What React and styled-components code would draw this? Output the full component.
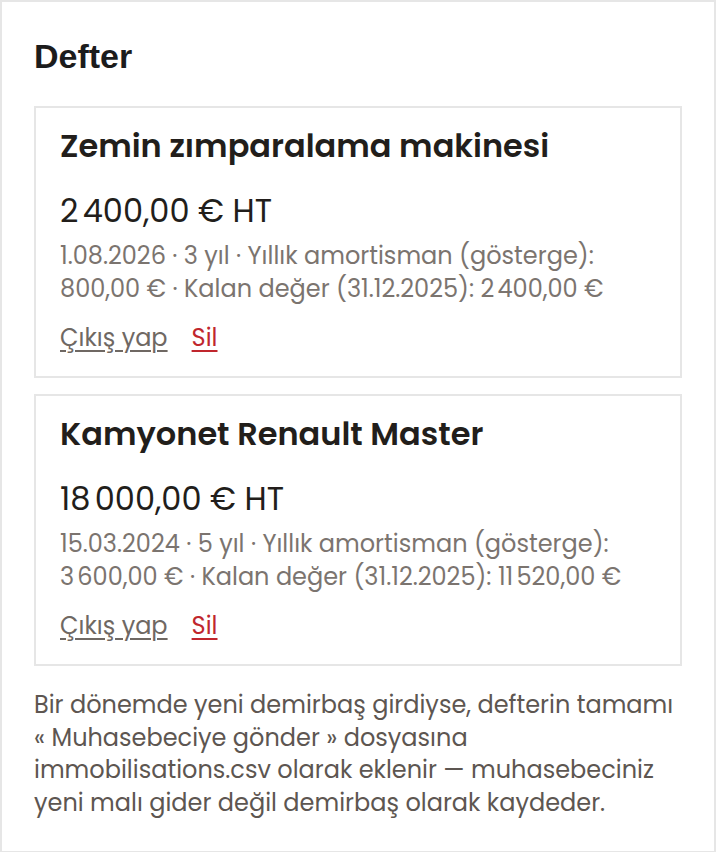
import React from 'react';
import styled, { createGlobalStyle } from 'styled-components';

const GlobalStyle = createGlobalStyle`
  html, body {
    margin: 0;
    padding: 0;
    background: #ffffff;
  }
  * {
    box-sizing: border-box;
  }
`;

const Panel = styled.section`
  min-height: 852px;
  border: 2px solid #e6e6e6;
  padding: 34px 32px 32px;
  font-family: Poppins, "Open Sans", sans-serif;
`;

const Heading = styled.h2`
  margin: 0 0 30px;
  font-family: "Liberation Sans", Arial, sans-serif;
  font-size: 34px;
  line-height: 40px;
  font-weight: 700;
  color: #1c1c1c;
`;

const List = styled.div`
  display: flex;
  flex-direction: column;
  gap: 16px;
`;

const Card = styled.article`
  border: 2px solid #e6e6e6;
  padding: 18px 24px 22px;
  display: flex;
  flex-direction: column;
`;

const Title = styled.h3`
  margin: 0;
  font-size: 32px;
  line-height: 40px;
  font-weight: 600;
  color: #221e1b;
`;

const Price = styled.div`
  margin-top: 25px;
  font-size: 32px;
  line-height: 40px;
  color: #221e1b;
`;

const Meta = styled.p`
  margin: 8px 0 0;
  font-size: 24px;
  line-height: 33px;
  color: #7b746f;
`;

const Actions = styled.div`
  margin-top: 17px;
  display: flex;
  gap: 24px;
  font-size: 24px;
  line-height: 32px;
`;

const ActionLink = styled.a`
  color: ${(p) => (p.$danger ? '#c0262d' : '#6f6863')};
  text-decoration: underline;
  text-decoration-thickness: 1.5px;
  text-underline-offset: 4px;
  cursor: pointer;
`;

const Note = styled.p`
  margin: 23px 0 0;
  font-size: 24px;
  line-height: 32.6px;
  color: #5d5651;
`;

const assets = [
  {
    name: 'Zemin zımparalama makinesi',
    price: '2\u202f400,00 € HT',
    meta: '1.08.2026 · 3 yıl · Yıllık amortisman (gösterge): 800,00 € · Kalan değer (31.12.2025): 2\u202f400,00 €',
  },
  {
    name: 'Kamyonet Renault Master',
    price: '18\u202f000,00 € HT',
    meta: '15.03.2024 · 5 yıl · Yıllık amortisman (gösterge): 3\u202f600,00 € · Kalan değer (31.12.2025): 11\u202f520,00 €',
  },
];

function App() {
  return (
    <Panel>
      <GlobalStyle />
      <Heading>Defter</Heading>
      <List>
        {assets.map((a) => (
          <Card key={a.name}>
            <Title>{a.name}</Title>
            <Price>{a.price}</Price>
            <Meta>{a.meta}</Meta>
            <Actions>
              <ActionLink>Çıkış yap</ActionLink>
              <ActionLink $danger>Sil</ActionLink>
            </Actions>
          </Card>
        ))}
      </List>
      <Note>
        Bir dönemde yeni demirbaş girdiyse, defterin tamamı « Muhasebeciye gönder » dosyasına
        immobilisations.csv olarak eklenir — muhasebeciniz yeni malı gider değil demirbaş olarak
        kaydeder.
      </Note>
    </Panel>
  );
}

export default App;
